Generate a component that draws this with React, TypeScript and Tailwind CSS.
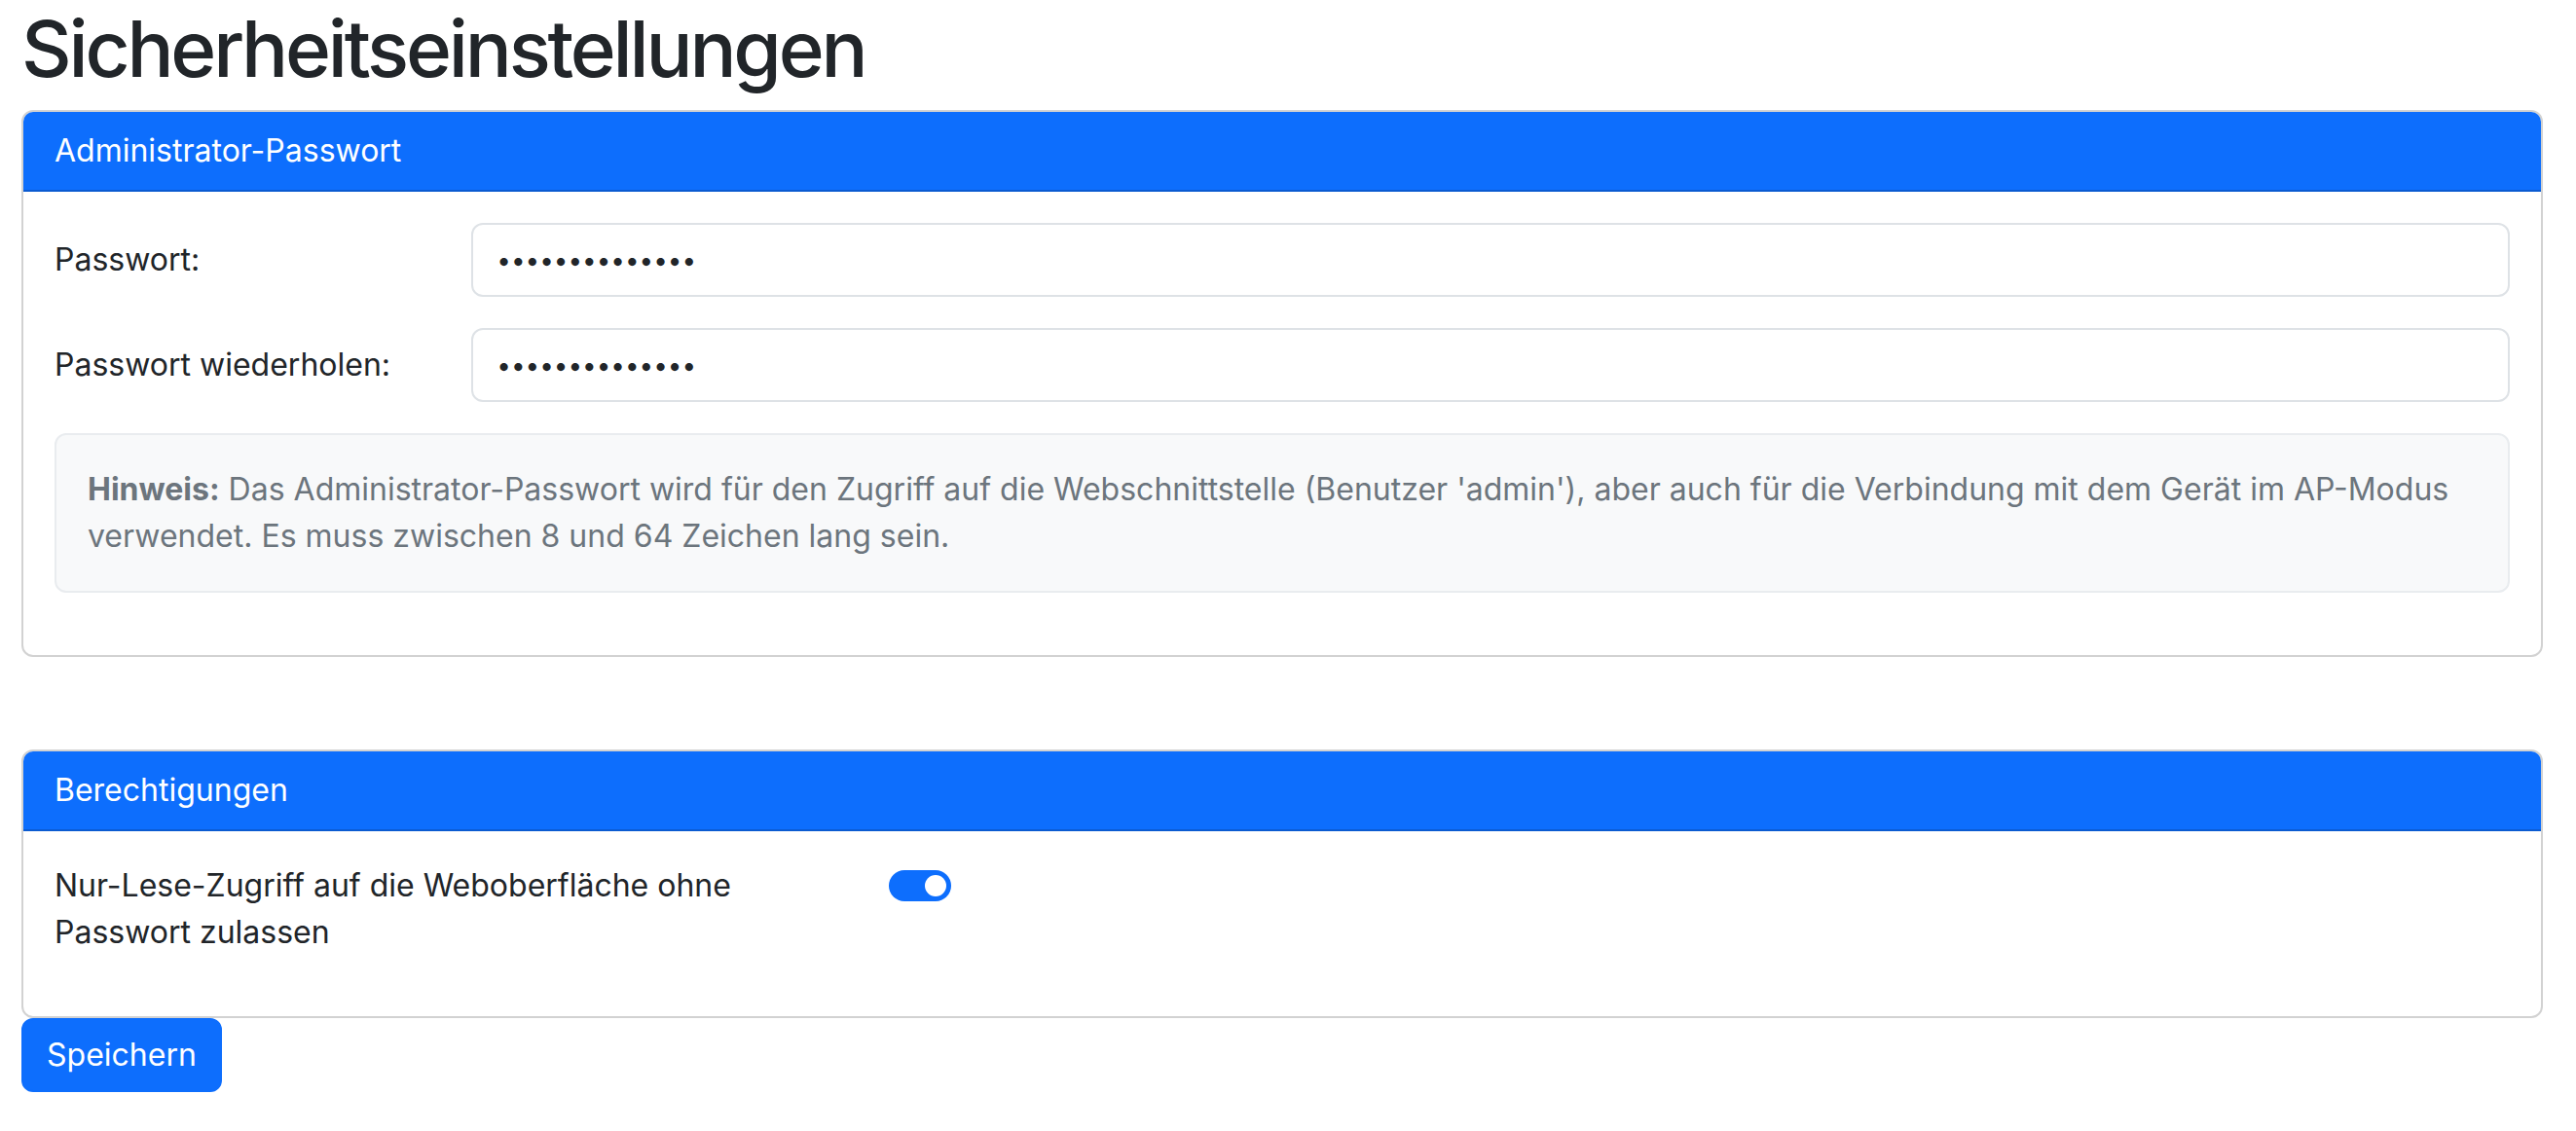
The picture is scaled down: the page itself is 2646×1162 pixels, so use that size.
import React from "react"

const font = "font-['Inter','Liberation_Sans',sans-serif]"

function CardHeader({ title }: { title: string }) {
  return (
    <div className="bg-[#0d6efd] text-white px-[32px] py-[16px] leading-[48px] border-b-2 border-[#0b5bd1] rounded-t-[10px]">
      {title}
    </div>
  )
}

function PasswordRow({ label }: { label: string }) {
  return (
    <div className="grid grid-cols-6 gap-x-12 mb-[32px]">
      <label className="py-[14px] leading-[48px]">{label}</label>
      <div className="col-span-5">
        <input
          type="password"
          defaultValue="adminpasswort1"
          className="w-full h-[76px] px-[24px] border-2 border-[#dee2e6] rounded-[12px] bg-white text-[26px] text-[#212529] outline-none"
        />
      </div>
    </div>
  )
}

export default function App() {
  return (
    <div className={`${font} pl-[22px] pr-[34px] text-[32px] leading-[48px] text-[#212529] bg-white min-h-screen`}>
      <h1 className="text-[80px] leading-[96px] font-medium tracking-[-3.2px] pt-[2px] mb-[15px]">Sicherheitseinstellungen</h1>

      {/* Admin password */}
      <div className="border-2 border-[#d2d2d2] rounded-[12px] mb-[95px]">
        <CardHeader title="Administrator-Passwort" />
        <div className="p-[32px]">
          <PasswordRow label="Passwort:" />
          <PasswordRow label="Passwort wiederholen:" />
          <div className="bg-[#f8f9fa] border-2 border-[#e9ecef] rounded-[12px] p-[32px] mb-[32px] text-[#6c757d]">
            <strong className="font-bold">Hinweis:</strong> Das Administrator-Passwort wird für den Zugriff auf die
            Webschnittstelle (Benutzer 'admin'), aber auch für die Verbindung mit dem Gerät im AP-Modus verwendet. Es
            muss zwischen 8 und 64 Zeichen lang sein.
          </div>
        </div>
      </div>

      {/* Permissions */}
      <div className="border-2 border-[#d2d2d2] rounded-[12px]">
        <CardHeader title="Berechtigungen" />
        <div className="p-[32px]">
          <div className="grid grid-cols-6 gap-x-12 mb-[30px]">
            <label className="col-span-2 leading-[48px]">
              Nur-Lese-Zugriff auf die Weboberfläche ohne Passwort zulassen
            </label>
            <div className="col-span-4 pt-[8px]">
              <div className="w-[64px] h-[32px] rounded-full bg-[#0d6efd] flex items-center justify-end pr-[5px]">
                <div className="w-[22px] h-[22px] rounded-full bg-white" />
              </div>
            </div>
          </div>
        </div>
      </div>

      <button className="h-[76px] px-[24px] border-2 border-[#0d6efd] bg-[#0d6efd] rounded-[12px] text-white text-[32px] leading-[48px]">
        Speichern
      </button>
    </div>
  )
}
